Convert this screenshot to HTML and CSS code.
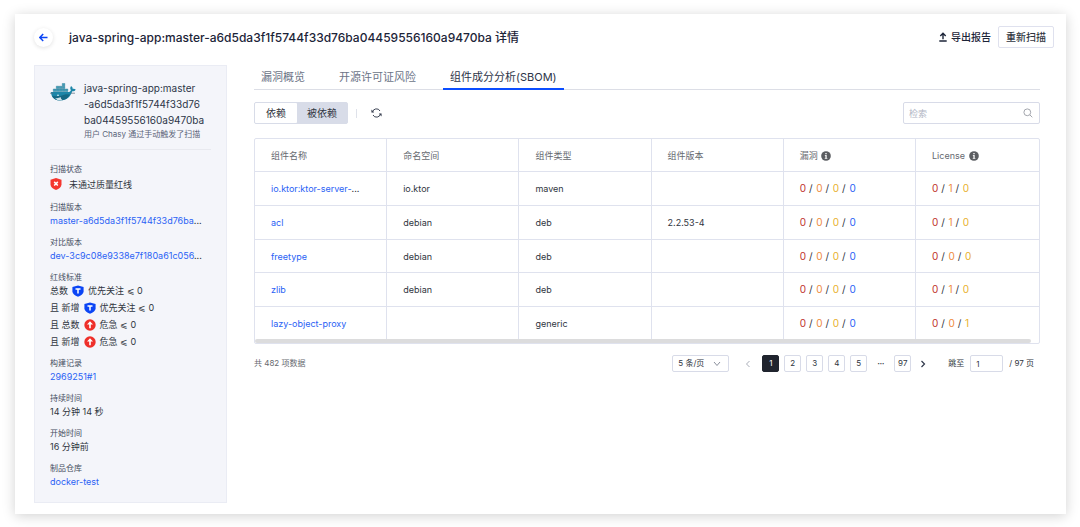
FILE: index.html
```html
<!DOCTYPE html>
<html lang="zh-CN">
<head>
  <meta charset="UTF-8" />
  <meta name="viewport" content="width=device-width, initial-scale=1.0"/>
  <title>组件成分分析(SBOM)</title>
  <link rel="stylesheet" href="styles.css">
</head>
<body>

  <svg class="symbols" aria-hidden="true">
    <symbol id="icon-first" viewBox="0 0 12 12">
      <path d="M6 .4 11.6 2v4.2c0 2.6-2.4 4.4-5.6 5.6C2.800 10.600.4 8.800.4 6.200V2z" fill="#0b45f5"/>
      <path d="M3.500 4h5M6 4v4.400" fill="none" stroke="#fff" stroke-width="1.500"/>
    </symbol>
    <symbol id="icon-danger" viewBox="0 0 12 12">
      <circle cx="6" cy="6" r="5.700" fill="#ee2f2a"/>
      <path d="M6 2.200 9 5.500H6.800V9.200H5.200V5.500H3z" fill="#fff"/>
    </symbol>
    <symbol id="icon-info" viewBox="0 0 12 12">
      <circle cx="6" cy="6" r="5.800" fill="#5b5d61"/>
      <path d="M5.200 2.400h1.600v1.500H5.200zM4.600 4.900h2.200v3.600h.8v.9H4.500v-.9h.8V5.800h-.7z" fill="#fff"/>
    </symbol>
  </svg>

  <div class="page">
    <header class="header">
      <button class="back" aria-label="返回">
        <svg width="9" height="9" viewBox="0 0 9 9"><path d="M8.500 4.500H1M4.200 1 .8 4.500l3.400 3.500" fill="none" stroke="#0b45f5" stroke-width="1.500"/></svg>
      </button>
      <h1>java-spring-app:master-a6d5da3f1f5744f33d76ba04459556160a9470ba 详情</h1>
      <button class="export">
        <svg width="8" height="10" viewBox="0 0 8 10"><path d="M.3 9h7.400M4 7.300V1.500M1.300 4 4 1.300 6.700 4" fill="none" stroke="#1c2438" stroke-width="1.400"/></svg>
        导出报告
      </button>
      <button class="rescan">重新扫描</button>
    </header>

    <div class="content">
      <aside class="sidebar">
        <div class="image-info">
          <svg class="docker" width="26" height="20" viewBox="0 0 26 20">
            <path d="M1 9h17.800c1.300 0 2-.8 2-1.900-.9-1.500-.6-3 .3-4.100 1.100.8 1.700 1.800 1.600 2.900 1.100-.3 2.200-.1 3 .5-.5 1.300-1.700 2-3.400 1.900C20.400 14 16.500 17.500 10.300 17.500 4.800 17.500 1.200 14.600 1 9z" fill="#1d86a8"/>
            <path d="M2 12.800c5 .8 9.300.2 13.800-1.600l4.200.4c-2 3.900-5.300 5.900-9.700 5.900-4.100 0-7.200-1.600-8.300-4.700z" fill="#156884"/>
            <path d="M5 15c2 .5 4.200.1 5.600-.9.200 1.500.9 2.500 2 3.200-3.300.5-5.800-.1-7.600-2.300z" fill="#cfe3ea"/>
            <path d="M3.300 6h2.500v2.500H3.300zM6.300 6h2.500v2.500H6.300zM9.300 6h2.500v2.500H9.300zM12.300 6h2.500v2.500h-2.500zM15.300 6h2.500v2.500h-2.500zM6.300 3.200h2.500v2.400H6.300zM9.300 3.200h2.500v2.400H9.300zM12.300 3.200h2.500v2.400h-2.500zM12.300.4h2.500v2.400h-2.500z" fill="#3d9db8" stroke="#1b6e8a" stroke-width=".4"/>
            <path d="M0 10.200h3M21 10.200h4" stroke="#5c6c7c" stroke-width=".7"/>
            <circle cx="8" cy="12.300" r=".8" fill="#fff"/>
          </svg>
          <div>
            <div class="image-name">java-spring-app:master<br>-a6d5da3f1f5744f33d76<br>ba04459556160a9470ba</div>
            <div class="trigger">用户 Chasy 通过手动触发了扫描</div>
          </div>
        </div>

        <dl class="info">
          <div>
            <dt>扫描状态</dt>
            <dd class="status">
              <svg width="12" height="12" viewBox="0 0 12 12"><path d="M6 0 11.500 1.800v4.400c0 2.800-2.300 4.600-5.500 5.800C2.800 10.800.5 9 .5 6.200V1.800z" fill="#f5372f"/><path d="m4.200 3.900 3.600 3.600m0-3.600L4.200 7.500" stroke="#fff" stroke-width="1.500"/></svg>
              未通过质量红线
            </dd>
          </div>
          <div>
            <dt>扫描版本</dt>
            <dd><a href="#">master-a6d5da3f1f5744f33d76ba</a>...</dd>
          </div>
          <div>
            <dt>对比版本</dt>
            <dd><a href="#">dev-3c9c08e9338e7f180a61c056</a>...</dd>
          </div>
          <div>
            <dt>红线标准</dt>
            <dd class="rules">
              <span>总数 <svg class="icon"><use href="#icon-first"/></svg> 优先关注 ⩽ 0</span>
              <span>且 新增 <svg class="icon"><use href="#icon-first"/></svg> 优先关注 ⩽ 0</span>
              <span>且 总数 <svg class="icon"><use href="#icon-danger"/></svg> 危急 ⩽ 0</span>
              <span>且 新增 <svg class="icon"><use href="#icon-danger"/></svg> 危急 ⩽ 0</span>
            </dd>
          </div>
          <div>
            <dt>构建记录</dt>
            <dd><a href="#">2969251#1</a></dd>
          </div>
          <div>
            <dt>持续时间</dt>
            <dd>14 分钟 14 秒</dd>
          </div>
          <div>
            <dt>开始时间</dt>
            <dd>16 分钟前</dd>
          </div>
          <div>
            <dt>制品仓库</dt>
            <dd><a href="#">docker-test</a></dd>
          </div>
        </dl>
      </aside>

      <main class="main">
        <nav class="tabs">
          <a href="#">漏洞概览</a>
          <a href="#">开源许可证风险</a>
          <a href="#" class="active">组件成分分析(SBOM)</a>
        </nav>

        <div class="toolbar">
          <div class="switch">
            <button class="active">依赖</button>
            <button>被依赖</button>
          </div>
          <span class="divider"></span>
          <button class="refresh" aria-label="刷新">
            <svg width="11" height="10" viewBox="0 0 11 10"><path d="M1.500 4.200A4 4 0 0 1 9 3M9.500 5.800A4 4 0 0 1 2 7" fill="none" stroke="#3c4354"/><path d="M.4 1.600v3h2.800zM10.600 8.400v-3H7.800z" fill="#3c4354"/></svg>
          </button>
          <label class="search">
            <input type="text" placeholder="检索" aria-label="检索">
            <svg width="10" height="10" viewBox="0 0 10 10"><circle cx="4.300" cy="4.300" r="3.400" fill="none" stroke="#a3a6ad"/><path d="m6.800 6.800 2.500 2.500" stroke="#a3a6ad"/></svg>
          </label>
        </div>

        <div class="table-box">
          <table>
            <thead>
              <tr>
                <th>组件名称</th>
                <th>命名空间</th>
                <th>组件类型</th>
                <th>组件版本</th>
                <th>漏洞 <svg class="info-icon"><use href="#icon-info"/></svg></th>
                <th class="last">License <svg class="info-icon"><use href="#icon-info"/></svg></th>
              </tr>
            </thead>
            <tbody>
              <tr>
                <td><a href="#">io.ktor:ktor-server-</a>...</td>
                <td>io.ktor</td>
                <td>maven</td>
                <td></td>
                <td class="counts"><b class="c1">0</b> / <b class="c2">0</b> / <b class="c3">0</b> / <b class="c4">0</b></td>
                <td class="counts"><b class="c1">0</b> / <b class="c2">1</b> / <b class="c3">0</b></td>
              </tr>
              <tr>
                <td><a href="#">acl</a></td>
                <td>debian</td>
                <td>deb</td>
                <td>2.2.53-4</td>
                <td class="counts"><b class="c1">0</b> / <b class="c2">0</b> / <b class="c3">0</b> / <b class="c4">0</b></td>
                <td class="counts"><b class="c1">0</b> / <b class="c2">1</b> / <b class="c3">0</b></td>
              </tr>
              <tr>
                <td><a href="#">freetype</a></td>
                <td>debian</td>
                <td>deb</td>
                <td></td>
                <td class="counts"><b class="c1">0</b> / <b class="c2">0</b> / <b class="c3">0</b> / <b class="c4">0</b></td>
                <td class="counts"><b class="c1">0</b> / <b class="c2">0</b> / <b class="c3">0</b></td>
              </tr>
              <tr>
                <td><a href="#">zlib</a></td>
                <td>debian</td>
                <td>deb</td>
                <td></td>
                <td class="counts"><b class="c1">0</b> / <b class="c2">0</b> / <b class="c3">0</b> / <b class="c4">0</b></td>
                <td class="counts"><b class="c1">0</b> / <b class="c2">1</b> / <b class="c3">0</b></td>
              </tr>
              <tr>
                <td><a href="#">lazy-object-proxy</a></td>
                <td></td>
                <td>generic</td>
                <td></td>
                <td class="counts"><b class="c1">0</b> / <b class="c2">0</b> / <b class="c3">0</b> / <b class="c4">0</b></td>
                <td class="counts"><b class="c1">0</b> / <b class="c2">0</b> / <b class="c3">1</b></td>
              </tr>
            </tbody>
          </table>
          <div class="scrollbar"></div>
        </div>

        <div class="pagination">
          <span class="total">共 482 项数据</span>
          <span class="page-size">
            <select aria-label="每页条数">
              <option>5 条/页</option>
              <option>10 条/页</option>
            </select>
            <svg width="8" height="6" viewBox="0 0 8 6"><path d="m1 1 3 3.500L7 1" fill="none" stroke="#8a8f9c"/></svg>
          </span>
          <div class="pages">
            <button class="arrow" aria-label="上一页" disabled><svg width="6" height="8" viewBox="0 0 6 8"><path d="M4.500 1 1.500 4l3 3" fill="none" stroke="#a9adb8"/></svg></button>
            <button class="active">1</button>
            <button>2</button>
            <button>3</button>
            <button>4</button>
            <button>5</button>
            <span class="more">•••</span>
            <button>97</button>
            <button class="arrow" aria-label="下一页"><svg width="6" height="8" viewBox="0 0 6 8"><path d="m1.500 1 3 3-3 3" fill="none" stroke="#30374a" stroke-width="1.200"/></svg></button>
          </div>
          <label class="jump">跳至 <input type="text" value="1"> / 97 页</label>
        </div>
      </main>
    </div>
  </div>

</body>
</html>
```
FILE: styles.css
```css
* {
  box-sizing: border-box;
}
body {
  margin: 0;
  padding: 14px 14px 14px 15px;
  background: #fff;
  color: #303540;
  font-family: Inter, "Noto Sans CJK SC", sans-serif;
  font-size: 9px;
  line-height: 15px;
}
button, input, select {
  margin: 0;
  padding: 0;
  border: none;
  background: none;
  color: inherit;
  font: inherit;
}
a {
  color: #2a62f5;
  text-decoration: none;
}
.symbols {
  display: none;
}
.page {
  padding: 12px 12px 11px 19px;
  background: #fff;
  box-shadow: 0 2px 12px rgba(0,0,0,0.18);
}

/* header */
.header {
  display: flex;
  align-items: center;
  height: 22px;
}
.back {
  display: flex;
  align-items: center;
  justify-content: center;
  width: 19px;
  height: 19px;
  border-radius: 50%;
  box-shadow: 0 1px 4px rgba(0,0,0,0.12);
}
h1 {
  flex: 1;
  margin: 2px 0 0 16px;
  color: #1c2438;
  font-size: 12px;
  font-weight: 500;
  line-height: 18px;
}
.export {
  display: flex;
  align-items: center;
  gap: 4px;
  margin-right: 7px;
  color: #1c2438;
  font-size: 10px;
  font-weight: 500;
}
.rescan {
  height: 22px;
  padding: 0 7px;
  border: 1px solid #dfe1ee;
  border-radius: 2px;
  font-size: 10px;
  font-weight: 500;
}

/* sidebar */
.content {
  display: flex;
  align-items: flex-start;
  gap: 27px;
  padding: 17px 14px 0 0;
}
.sidebar {
  flex: none;
  width: 193px;
  padding: 14px 15px 13px;
  border: 1px solid #eaecf4;
  background: #f4f5fa;
}
.image-info {
  display: flex;
  gap: 8px;
  padding-bottom: 9px;
  border-bottom: 1px solid #e8e9ef;
}
.docker {
  flex: none;
  margin-top: 3px;
}
.image-name {
  color: #2d3548;
  font-size: 10px;
  line-height: 16px;
}
.trigger {
  color: #5a6378;
  font-size: 8px;
  line-height: 12px;
  white-space: nowrap;
}
.info {
  display: flex;
  flex-direction: column;
  gap: 8px;
  margin: 13px 0 0;
}
.info dt {
  color: #454d60;
  font-size: 8px;
  line-height: 12px;
}
.info dd {
  margin: 0;
  white-space: nowrap;
}
.info .status {
  display: flex;
  align-items: center;
  gap: 7px;
  height: 18px;
}
.rules {
  display: flex;
  flex-direction: column;
  gap: 2px;
}
.rules span {
  display: flex;
  align-items: center;
  gap: 4px;
}
.icon {
  width: 12px;
  height: 12px;
}

/* tabs */
.main {
  flex: 1;
  min-width: 0;
}
.tabs {
  display: flex;
  gap: 20px;
  border-bottom: 1px solid #dcdee6;
}
.tabs a {
  margin-bottom: -1px;
  padding: 2px 7px 0;
  border-bottom: 2px solid transparent;
  color: #6c7487;
  font-size: 11px;
  line-height: 21px;
}
.tabs .active {
  border-color: #0b4dff;
  color: #2d3548;
}

/* toolbar */
.toolbar {
  display: flex;
  align-items: center;
  padding: 12px 0 14px;
}
.switch {
  display: flex;
  height: 22px;
  border: 1px solid #d8dce8;
  border-radius: 2px;
  background: #d8dce8;
}
.switch button {
  padding: 0 10px;
  font-size: 10px;
}
.switch .active {
  padding: 0 11px;
  border-radius: 1px;
  background: #fff;
}
.divider {
  width: 1px;
  height: 9px;
  margin: 0 14px 0 8px;
  background: #dfe2ea;
}
.refresh {
  display: flex;
}
.search {
  display: flex;
  align-items: center;
  width: 137px;
  height: 22px;
  margin-left: auto;
  padding: 0 6px 0 5px;
  border: 1px solid #d8dbe8;
  border-radius: 2px;
}
.search input {
  flex: 1;
  min-width: 0;
  outline: none;
}
.search input::placeholder {
  color: #b0b5c4;
}

/* table */
.table-box {
  border: 1px solid #dfe2ee;
  border-radius: 2px;
}
table {
  width: 100%;
  height: 200px;
  border-collapse: separate;
  border-spacing: 0;
  table-layout: fixed;
}
th, td {
  padding: 0 16px;
  border-right: 1px solid #dfe2ee;
  border-bottom: 1px solid #dfe2ee;
  text-align: left;
  white-space: nowrap;
}
th {
  height: 33px;
  color: #66696f;
  font-weight: 400;
}
th.last {
  width: 123px;
}
th:last-child, td:last-child {
  border-right: none;
}
tr:last-child td {
  border-bottom: none;
}
.counts {
  font-size: 10px;
}
.counts b {
  font-weight: 400;
}
.counts b + b {
  margin-left: 1px;
}
.c1 {
  color: #c0322b;
}
.c2 {
  color: #ee8a3c;
}
.c3 {
  color: #e8b12c;
}
.c4 {
  color: #2a62f5;
}
.info-icon {
  width: 10px;
  height: 10px;
  margin-left: 1px;
  vertical-align: -2px;
}
.scrollbar {
  height: 4px;
  margin-right: 8px;
  border-radius: 2px;
  background: #dcdcdd;
}

/* pagination */
.pagination {
  display: flex;
  align-items: center;
  margin-top: 11px;
  padding-right: 6px;
  font-size: 8px;
}
.total {
  flex: 1;
  color: #66696f;
}
.page-size {
  display: flex;
  align-items: center;
  width: 57px;
  height: 17px;
  padding: 0 7px 0 5px;
  border: 1px solid #d8dbe8;
  border-radius: 2px;
}
.page-size select {
  flex: 1;
  min-width: 0;
  appearance: none;
}
.pages {
  display: flex;
  align-items: center;
  gap: 5px;
  margin: 0 22px 0 16px;
}
.pages button {
  width: 17px;
  height: 17px;
  border: 1px solid #d8dbe8;
  border-radius: 2px;
}
.pages .active {
  border-color: #20242e;
  background: #20242e;
  color: #fff;
}
.pages .arrow {
  display: flex;
  align-items: center;
  justify-content: center;
  width: 6px;
  margin: 0 6px 0 0;
  border: none;
}
.pages .arrow:last-child {
  margin: 0 0 0 4px;
}
.more {
  width: 17px;
  font-size: 4px;
  text-align: center;
}
.jump {
  display: flex;
  align-items: center;
  gap: 6px;
}
.jump input {
  width: 33px;
  height: 17px;
  padding: 0 5px;
  border: 1px solid #d8dbe8;
  border-radius: 2px;
}
```
